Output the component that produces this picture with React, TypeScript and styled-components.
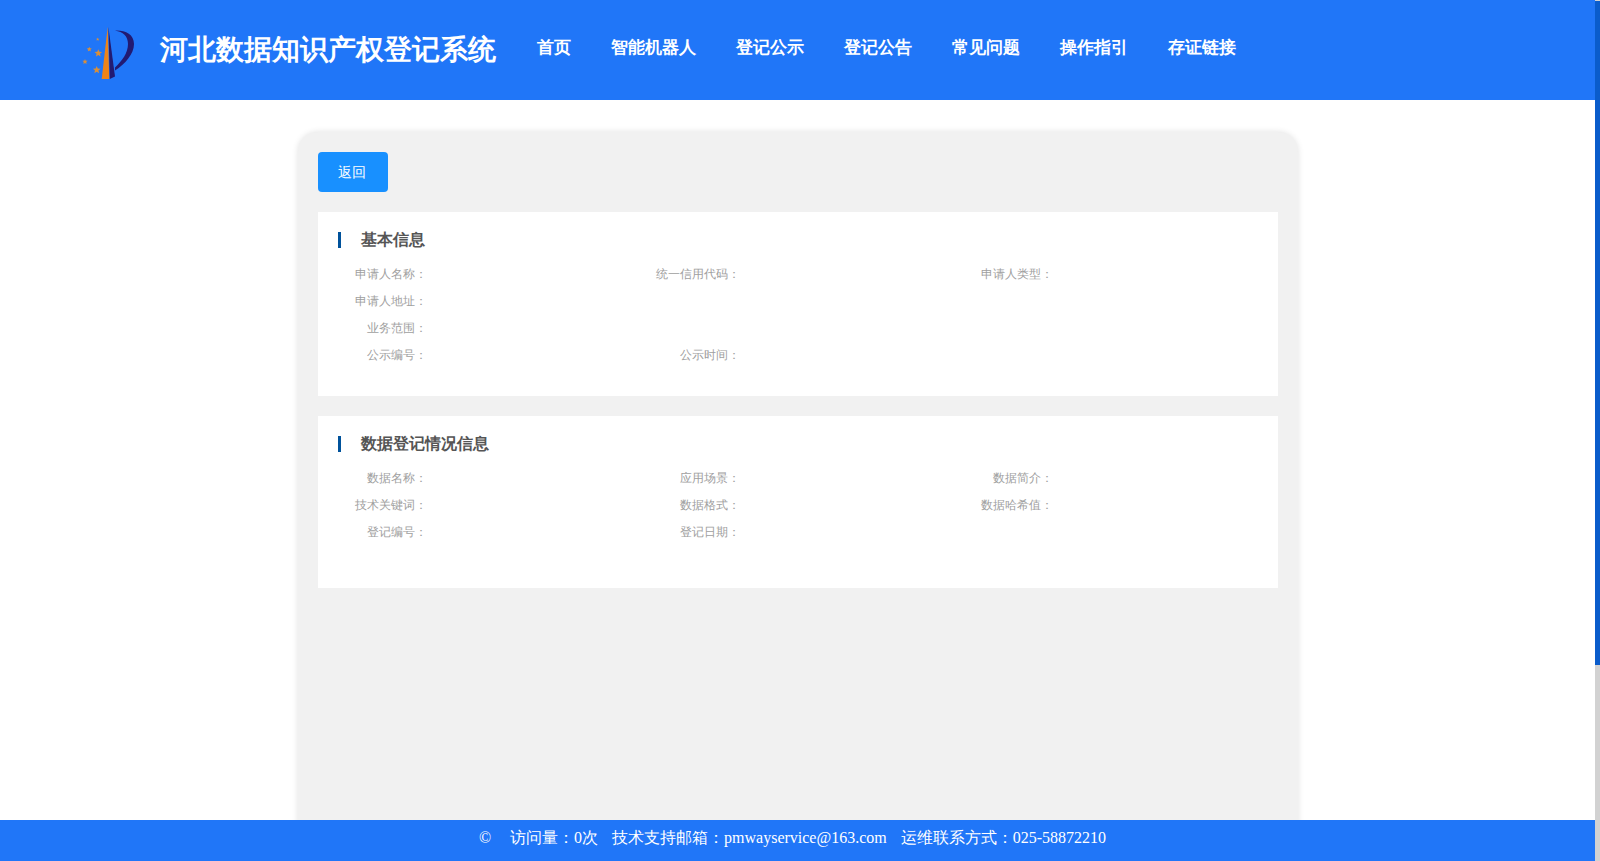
import React from "react";
import styled, { createGlobalStyle } from "styled-components";

const GlobalStyle = createGlobalStyle`
  html, body {
    height: 100%;
    overflow: hidden;
  }
  body {
    margin: 0;
    background: #fff;
    font-family: "Liberation Serif", serif;
  }
`;

const Page = styled.div`
  height: 100vh;
  padding-right: 5px;
  box-sizing: border-box;
  overflow-y: scroll;
`;

const ScrollTrack = styled.div`
  position: fixed;
  top: 0;
  right: 0;
  bottom: 0;
  width: 5px;
  background: #d2d2d2;
`;

const ScrollThumb = styled.div`
  height: 664px;
  margin-top: 1px;
  background: #0a5ccb;
`;

const Header = styled.header`
  height: 100px;
  background: #2076f8;
  display: flex;
  align-items: center;
  padding-left: 80px;
  color: #fff;
`;

const Logo = styled.svg`
  width: 60px;
  height: 60px;
  flex-shrink: 0;
  margin-top: 8px;
`;

const SiteName = styled.h1`
  margin: 0 0 0 20px;
  font-size: 28px;
  line-height: 40px;
  font-weight: 700;
  white-space: nowrap;
`;

const Nav = styled.nav`
  display: flex;
  gap: 40px;
  margin-left: 41px;
  margin-bottom: 6px;
`;

const NavLink = styled.a`
  font-size: 17px;
  font-weight: 700;
  color: #fff;
  white-space: nowrap;
`;

const Main = styled.main`
  width: 960px;
  margin: 32px auto 0;
  padding: 20px 20px 528px;
  background: #f1f1f1;
  border-radius: 20px;
  box-shadow: 0 0 6px rgba(0, 0, 0, 0.12);
`;

const BackButton = styled.button`
  display: block;
  width: 70px;
  height: 40px;
  padding: 1px 1px 0 0;
  border: 0;
  border-radius: 4px;
  background: #1890ff;
  color: #fff;
  font-family: inherit;
  font-size: 14px;
`;

const Section = styled.section<{ $height: number }>`
  height: ${(p) => p.$height}px;
  margin-top: 20px;
  padding: 20px 20px 0;
  background: #fff;
  box-sizing: border-box;
`;

const SectionTitle = styled.h2`
  margin: 0 0 13px;
  border-left: 3px solid #00529b;
  padding-left: 20px;
  height: 16px;
  font-size: 16px;
  line-height: 16px;
  font-weight: 700;
  color: #555;
`;

const FieldGrid = styled.div`
  display: grid;
  grid-template-columns: repeat(3, 313px);
  grid-auto-rows: 27px;
  margin-left: 1px;
`;

const Field = styled.div`
  grid-column: span 1;
`;

const FullField = styled(Field)`
  grid-column: 1 / -1;
`;

const Label = styled.span`
  display: block;
  width: 88px;
  font-size: 12px;
  line-height: 27px;
  text-align: right;
  color: #a0a0a0;
  white-space: nowrap;
`;

const Footer = styled.footer`
  position: fixed;
  left: 0;
  right: 5px;
  bottom: 0;
  height: 41px;
  padding-right: 10px;
  background: #2076f8;
  color: #fff;
  font-size: 16px;
  line-height: 35px;
  text-align: center;
  white-space: nowrap;
`;

const FooterItem = styled.span`
  margin-left: 14px;
`;

const Copyright = styled.span`
  margin-right: 5px;
`;

const navItems = ["首页", "智能机器人", "登记公示", "登记公告", "常见问题", "操作指引", "存证链接"];

const Star = ({ x, y, r }: { x: number; y: number; r: number }) => {
  const points = Array.from({ length: 10 }, (_, i) => {
    const a = (Math.PI / 5) * i - Math.PI / 2;
    const d = i % 2 === 0 ? r : r * 0.45;
    return `${(x + d * Math.cos(a)).toFixed(2)},${(y + d * Math.sin(a)).toFixed(2)}`;
  }).join(" ");
  return <polygon points={points} fill="#d98f3a" />;
};

const App = () => (
  <Page>
    <GlobalStyle />
    <Header>
      <Logo viewBox="0 0 60 60">
        <path d="M27.7 3 L21.7 55 L29.3 55 Z" fill="#ee8419" />
        <path d="M28.4 3 L35 52.5 L29.8 55 Z" fill="#221a72" />
        <path d="M35 6.5 C45 6 54 10 54 20 C54 30 45 40 35 46.5 L35 43.5 C42 37 48 29 48 20 C48 12 43 8 35 6.5 Z" fill="#221a72" />
        <Star x={18.3} y={29.3} r={4} />
        <Star x={16.7} y={46} r={4} />
        <Star x={5} y={37.7} r={2.8} />
        <Star x={9.3} y={25.3} r={2.6} />
        <Star x={17.7} y={15.3} r={1.8} />
      </Logo>
      <SiteName>河北数据知识产权登记系统</SiteName>
      <Nav>
        {navItems.map((item) => (
          <NavLink key={item}>{item}</NavLink>
        ))}
      </Nav>
    </Header>
    <Main>
      <BackButton>返回</BackButton>
      <Section $height={184}>
        <SectionTitle>基本信息</SectionTitle>
        <FieldGrid>
          <Field><Label>申请人名称：</Label></Field>
          <Field><Label>统一信用代码：</Label></Field>
          <Field><Label>申请人类型：</Label></Field>
          <FullField><Label>申请人地址：</Label></FullField>
          <FullField><Label>业务范围：</Label></FullField>
          <Field><Label>公示编号：</Label></Field>
          <Field><Label>公示时间：</Label></Field>
        </FieldGrid>
      </Section>
      <Section $height={172}>
        <SectionTitle>数据登记情况信息</SectionTitle>
        <FieldGrid>
          <Field><Label>数据名称：</Label></Field>
          <Field><Label>应用场景：</Label></Field>
          <Field><Label>数据简介：</Label></Field>
          <Field><Label>技术关键词：</Label></Field>
          <Field><Label>数据格式：</Label></Field>
          <Field><Label>数据哈希值：</Label></Field>
          <Field><Label>登记编号：</Label></Field>
          <Field><Label>登记日期：</Label></Field>
        </FieldGrid>
      </Section>
    </Main>
    <Footer>
      <Copyright>©</Copyright>
      <FooterItem>访问量：0次</FooterItem>
      <FooterItem>技术支持邮箱：pmwayservice@163.com</FooterItem>
      <FooterItem>运维联系方式：025-58872210</FooterItem>
    </Footer>
    <ScrollTrack>
      <ScrollThumb />
    </ScrollTrack>
  </Page>
);

export default App;
